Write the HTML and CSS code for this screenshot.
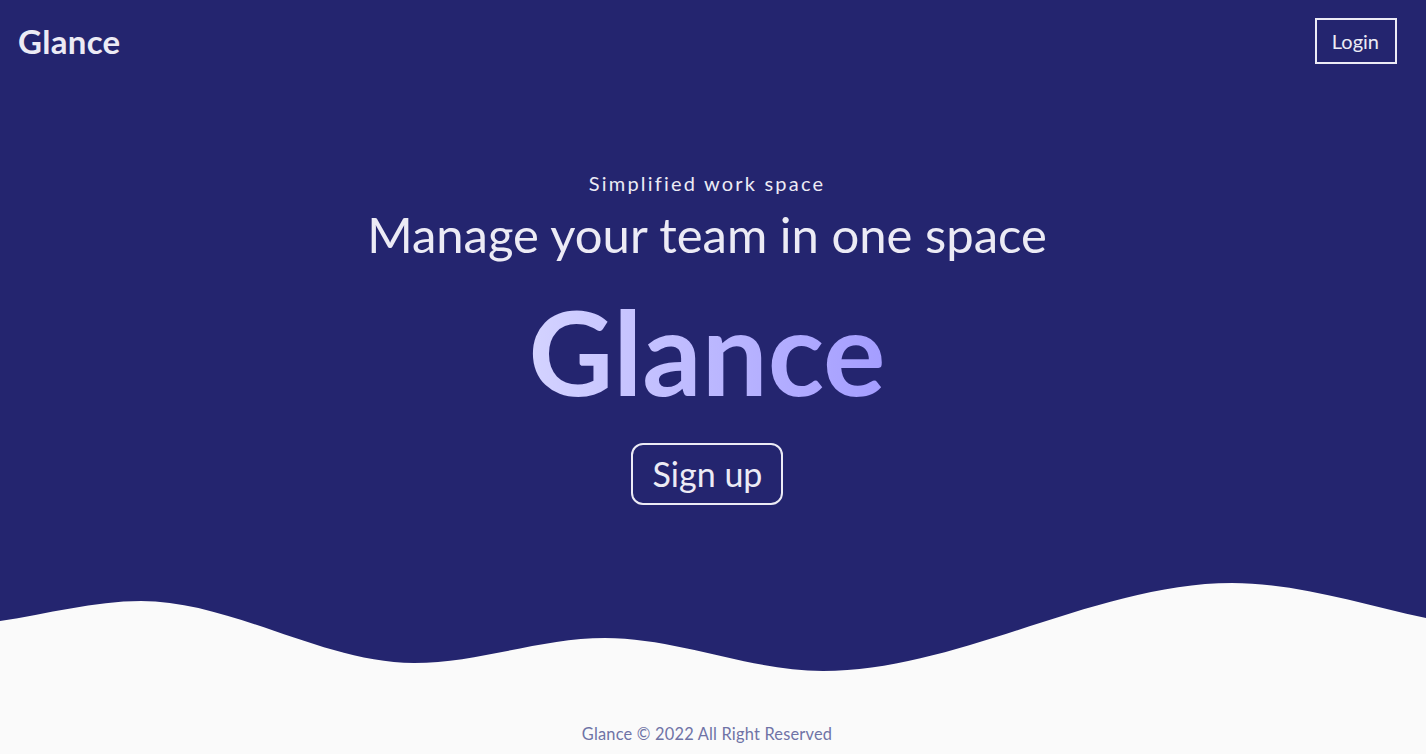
FILE: index.html
```html
<!DOCTYPE html>
<html lang="en">
<head>
<meta charset="utf-8">
<title>Glance</title>
<link rel="stylesheet" href="styles.css">
</head>
<body>
<div class="page">
  <section class="hero">
    <header class="topbar">
      <a class="logo" href="#">Glance</a>
      <a class="login" href="#">Login</a>
    </header>
    <main class="intro">
      <p class="tagline">Simplified work space</p>
      <h1 class="headline">Manage your team in one space</h1>
      <h2 class="brand">Glance</h2>
      <a class="signup" href="#">Sign up</a>
    </main>
  </section>
  <svg class="wave" viewBox="0 0 1426 95" preserveAspectRatio="none" aria-hidden="true">
    <path d="M0,41 C47,34 94,21 141,21 C232,21 323,83 414,83 C478,83 541,58 605,58 C678,58 750,91 823,91 C959,91 1096,3 1232,3 C1297,3 1361,24 1426,38 L1426,0 L0,0 Z" fill="#24256f"/>
  </svg>
  <footer class="footer">Glance © 2022 All Right Reserved</footer>
</div>
</body>
</html>
```
FILE: styles.css
```css
* { box-sizing: border-box; }
html, body { margin: 0; padding: 0; }
body {
  background: #fafafa;
  font-family: Lato, "Open Sans", sans-serif;
  color: #ecebf5;
}
.page { display: flex; flex-direction: column; min-height: 754px; }
.hero {
  background: #24256f;
  height: 580px;
  display: flex;
  flex-direction: column;
}
.topbar {
  display: flex;
  justify-content: space-between;
  align-items: center;
  padding: 18px 29px 0 18px;
}
.logo {
  color: #ecebf5;
  text-decoration: none;
  font-weight: 700;
  font-size: 33px;
  letter-spacing: 0.3px;
  line-height: 46px;
}
.login {
  color: #ecebf5;
  text-decoration: none;
  font-size: 20px;
  line-height: 42px;
  border: 2px solid #ecebf5;
  padding: 0 16px 0 15px;
}
.intro {
  display: flex;
  flex-direction: column;
  align-items: center;
  padding: 105px 12px 0 0;
}
.tagline {
  margin: 0;
  font-size: 20px;
  line-height: 28px;
  letter-spacing: 2.2px;
}
.headline {
  margin: 8px 0 0;
  font-weight: 400;
  font-size: 49px;
  line-height: 58px;
}
.brand {
  margin: 20px 0 0;
  font-weight: 700;
  font-size: 117px;
  line-height: 136px;
  background: linear-gradient(90deg, #d4d3ff, #a49dff);
  -webkit-background-clip: text;
  background-clip: text;
  color: transparent;
}
.signup {
  margin-top: 24px;
  color: #ecebf5;
  text-decoration: none;
  font-size: 34px;
  line-height: 58px;
  border: 2px solid #ecebf5;
  border-radius: 12px;
  padding: 0 19px 0 20px;
}
.wave { display: block; width: 100%; height: 95px; }
.footer {
  text-align: center;
  font-size: 16.4px;
  letter-spacing: 0.2px;
  color: #6f73a6;
  padding: 49px 12px 0 0;
}
```
